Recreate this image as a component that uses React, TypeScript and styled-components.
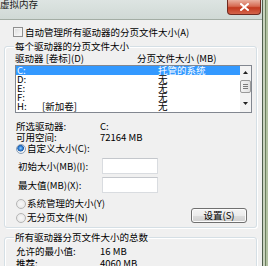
import React from 'react';
import styled, { createGlobalStyle } from 'styled-components';

const Global = createGlobalStyle`
  html, body { margin: 0; padding: 0; background: #fff; }
  body {
    font-family: "Noto Sans CJK SC", "Noto Sans", sans-serif;
    font-size: 9.5px;
    color: #000;
  }
  * { box-sizing: border-box; }
`;

const Window = styled.div`
  width: 268px;
  height: 266px;
  overflow: hidden;
  display: flex;
`;

const Main = styled.div`
  width: 262px;
  display: flex;
  flex-direction: column;
`;

const Frame = styled.div`
  width: 6px;
  flex-shrink: 0;
  background: linear-gradient(
    to right,
    #4f5e4c 0, #4f5e4c 1px,
    #c9d3bf 1px, #c9d3bf 3px,
    #6b7e5e 3px, #6b7e5e 4px,
    #b3c2a3 4px
  );
`;

const TitleBar = styled.div`
  height: 20px;
  flex-shrink: 0;
  display: flex;
  justify-content: space-between;
  align-items: flex-start;
  background: linear-gradient(#dde4e2, #d0d9d5);
  border-bottom: 1px solid #a3ada4;
`;

const Title = styled.span`
  line-height: 11px;
  margin-top: -1px;
  color: #1a1a1a;
`;

const CloseButton = styled.div`
  width: 34px;
  height: 15px;
  margin-right: 1px;
  border: 1px solid #6e2a20;
  border-top: none;
  border-radius: 0 0 4px 4px;
  background: linear-gradient(#eab0a0 0%, #d66a52 45%, #c2391f 55%, #d4644a 100%);
  display: flex;
  align-items: center;
  justify-content: center;
`;

const Body = styled.div`
  flex: 1;
  min-height: 0;
  overflow: hidden;
  background: #f0f0f0;
  padding: 6px 5px 0 4px;
`;

const CheckRow = styled.div`
  height: 12px;
  display: flex;
  align-items: center;
  gap: 2px;
  padding-left: 9px;
  line-height: 12px;
  white-space: nowrap;
`;

const CheckBox = styled.span`
  width: 10px;
  height: 10px;
  flex-shrink: 0;
  border: 1px solid #8f8f8f;
  background: linear-gradient(135deg, #dcdcdc, #fbfbfb);
  box-shadow: inset 0 0 0 1px #f4f4f4;
`;

const Group = styled.fieldset<{ $gap?: number }>`
  margin: ${(p) => p.$gap ?? 2}px 0 0 0;
  padding: 0 4px 4px 10px;
  border: 1px solid #d5dfe5;
  border-radius: 3px;
  box-shadow: inset 1px 1px 0 #fff, 1px 1px 0 #fff;
  min-width: 0;
`;

const Legend = styled.legend`
  padding: 0 1px;
  margin-left: -1px;
  line-height: 12px;
  height: 12px;
  white-space: nowrap;
`;

const HeaderRow = styled.div`
  display: grid;
  grid-template-columns: 122px 1fr;
  height: 12px;
  line-height: 12px;
  white-space: nowrap;
`;

const ListBox = styled.div`
  margin-top: 1px;
  height: 48px;
  border: 1px solid #828790;
  background: #fff;
  display: flex;
`;

const Rows = styled.div`
  flex: 1;
  overflow: hidden;
`;

const DriveRow = styled.div<{ $selected?: boolean }>`
  height: 9px;
  line-height: 9px;
  display: grid;
  grid-template-columns: 25px 116px 1fr;
  padding-left: 1px;
  background: ${(p) => (p.$selected ? '#3399ff' : 'transparent')};
  color: ${(p) => (p.$selected ? '#fff' : '#000')};
  white-space: nowrap;
`;

const ScrollBar = styled.div`
  width: 11px;
  background: #f3f3f3;
  display: flex;
  flex-direction: column;
  align-items: center;
`;

const Arrow = styled.div<{ $bottom?: number }>`
  height: 12px;
  width: 11px;
  display: flex;
  align-items: center;
  justify-content: center;
  margin-bottom: ${(p) => p.$bottom ?? 0}px;
`;

const Thumb = styled.div`
  margin-top: 2px;
  width: 11px;
  height: 13px;
  border: 1px solid #9a9a9a;
  border-radius: 2px;
  background: linear-gradient(to right, #f3f3f3, #e2e2e2);
  display: flex;
  flex-direction: column;
  align-items: center;
  justify-content: center;
  gap: 1px;
`;

const Grip = styled.span`
  width: 5px;
  height: 1px;
  background: #7b7b7b;
`;

const Track = styled.div`
  flex: 1;
`;

const InfoRow = styled.div<{ $top?: number; $h?: number }>`
  display: grid;
  grid-template-columns: 84px 1fr;
  padding-left: 1px;
  margin-top: ${(p) => p.$top ?? 0}px;
  height: ${(p) => p.$h ?? 11}px;
  line-height: ${(p) => p.$h ?? 11}px;
  white-space: nowrap;
`;

const RadioRow = styled.div<{ $top?: number }>`
  display: flex;
  align-items: center;
  gap: 1px;
  padding-left: 1px;
  height: 11px;
  line-height: 11px;
  margin-top: ${(p) => p.$top ?? 0}px;
  white-space: nowrap;
`;

const Radio = styled.span<{ $checked?: boolean }>`
  width: 10px;
  height: 10px;
  flex-shrink: 0;
  border-radius: 50%;
  border: 1px solid ${(p) => (p.$checked ? '#8aa0b8' : '#b5b5b5')};
  background: ${(p) =>
    p.$checked
      ? 'radial-gradient(circle at 45% 40%, #8fd0ff 0, #2f7fd6 2px, #1b5aa8 3px, #f4f4f4 3.6px, #e6e6e6 100%)'
      : 'radial-gradient(circle at 50% 50%, #f8f8f8 0, #e4e4e4 100%)'};
`;

const SizeRow = styled.div<{ $top?: number }>`
  display: grid;
  grid-template-columns: 84px 56px;
  align-items: center;
  padding-left: 3px;
  margin-top: ${(p) => p.$top ?? 0}px;
  height: 16px;
  white-space: nowrap;
`;

const SizeInput = styled.div`
  height: 16px;
  background: #fff;
  border: 1px solid #d9dce0;
  border-top-color: #c4c7cc;
`;

const BottomRow = styled.div`
  display: flex;
  justify-content: space-between;
  align-items: flex-end;
  margin-top: 5px;
`;

const RadioColumn = styled.div`
  display: flex;
  flex-direction: column;
`;

const Button = styled.div`
  width: 56px;
  height: 15px;
  margin-right: 5px;
  border: 1px solid #707070;
  border-radius: 3px;
  background: linear-gradient(#f4f4f4 0%, #ebebeb 50%, #dddddd 51%, #cfcfcf 100%);
  box-shadow: inset 0 0 0 1px #fcfcfc;
  display: flex;
  align-items: center;
  justify-content: center;
  line-height: 13px;
  white-space: nowrap;
`;

const Up = () => (
  <svg width="5" height="3" viewBox="0 0 5 3">
    <path d="M2.5 0 L5 3 L0 3 Z" fill="#222" />
  </svg>
);
const Down = () => (
  <svg width="5" height="3" viewBox="0 0 5 3">
    <path d="M0 0 L5 0 L2.5 3 Z" fill="#222" />
  </svg>
);

const drives = [
  { d: 'C:', label: '', size: '托管的系统', selected: true },
  { d: 'D:', label: '', size: '无' },
  { d: 'E:', label: '', size: '无' },
  { d: 'F:', label: '', size: '无' },
  { d: 'H:', label: '[新加卷]', size: '无' },
];

export default function App() {
  return (
    <>
      <Global />
      <Window>
        <Main>
          <TitleBar>
            <Title>虚拟内存</Title>
            <CloseButton>
              <svg width="9" height="8" viewBox="0 0 9 8">
                <path d="M1 1 L8 7 M8 1 L1 7" stroke="#fff" strokeWidth="2" strokeLinecap="square" />
              </svg>
            </CloseButton>
          </TitleBar>
          <Body>
            <CheckRow>
              <CheckBox />
              <span>自动管理所有驱动器的分页文件大小(A)</span>
            </CheckRow>
            <Group>
              <Legend>每个驱动器的分页文件大小</Legend>
              <HeaderRow>
                <span>驱动器 [卷标](D)</span>
                <span>分页文件大小 (MB)</span>
              </HeaderRow>
              <ListBox>
                <Rows>
                  {drives.map((r) => (
                    <DriveRow key={r.d} $selected={r.selected}>
                      <span>{r.d}</span>
                      <span>{r.label}</span>
                      <span>{r.size}</span>
                    </DriveRow>
                  ))}
                </Rows>
                <ScrollBar>
                  <Arrow>
                    <Up />
                  </Arrow>
                  <Thumb>
                    <Grip />
                    <Grip />
                    <Grip />
                  </Thumb>
                  <Track />
                  <Arrow $bottom={3}>
                    <Down />
                  </Arrow>
                </ScrollBar>
              </ListBox>
              <InfoRow $top={8}>
                <span>所选驱动器:</span>
                <span>C:</span>
              </InfoRow>
              <InfoRow>
                <span>可用空间:</span>
                <span>72164 MB</span>
              </InfoRow>
              <RadioRow>
                <Radio $checked />
                <span>自定义大小(C):</span>
              </RadioRow>
              <SizeRow $top={4}>
                <span>初始大小(MB)(I):</span>
                <SizeInput />
              </SizeRow>
              <SizeRow $top={3}>
                <span>最大值(MB)(X):</span>
                <SizeInput />
              </SizeRow>
              <BottomRow>
                <RadioColumn>
                  <RadioRow>
                    <Radio />
                    <span>系统管理的大小(Y)</span>
                  </RadioRow>
                  <RadioRow $top={3}>
                    <Radio />
                    <span>无分页文件(N)</span>
                  </RadioRow>
                </RadioColumn>
                <Button>设置(S)</Button>
              </BottomRow>
            </Group>
            <Group $gap={3}>
              <Legend>所有驱动器分页文件大小的总数</Legend>
              <InfoRow $top={2} $h={12}>
                <span>允许的最小值:</span>
                <span>16 MB</span>
              </InfoRow>
              <InfoRow $h={12}>
                <span>推荐:</span>
                <span>4060 MB</span>
              </InfoRow>
            </Group>
          </Body>
        </Main>
        <Frame />
      </Window>
    </>
  );
}
